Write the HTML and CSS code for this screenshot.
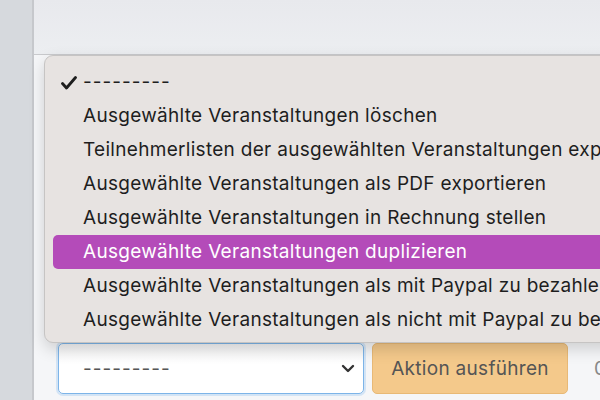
FILE: index.html
```html
<!DOCTYPE html>
<html lang="de">
<head>
<meta charset="utf-8">
<title>Aktionen</title>
<link rel="stylesheet" href="styles.css">
</head>
<body>
<div class="app">
  <aside class="sidebar"></aside>
  <main class="main">
    <div class="topband"></div>
    <div class="spacer"></div>
    <div class="actions">
      <div class="select">
        <span class="select-value">---------</span>
        <svg class="chevron" width="14" height="10" viewBox="0 0 14 10"><polyline points="2,2 7,7 12,2" fill="none" stroke="#333" stroke-width="2.4" stroke-linecap="round" stroke-linejoin="round"/></svg>
      </div>
      <button class="btn">Aktion ausführen</button>
      <span class="counter">0 von 12 ausgewählt</span>
    </div>
  </main>
  <ul class="menu">
    <li class="item checked"><svg class="check" width="16" height="14" viewBox="0 0 16 14"><polyline points="1.5,7.5 5.5,12 14.5,1.5" fill="none" stroke="#1e1e1e" stroke-width="2.8" stroke-linecap="round" stroke-linejoin="round"/></svg>---------</li>
    <li class="item">Ausgewählte Veranstaltungen löschen</li>
    <li class="item">Teilnehmerlisten der ausgewählten Veranstaltungen exportieren</li>
    <li class="item">Ausgewählte Veranstaltungen als PDF exportieren</li>
    <li class="item">Ausgewählte Veranstaltungen in Rechnung stellen</li>
    <li class="item active">Ausgewählte Veranstaltungen duplizieren</li>
    <li class="item">Ausgewählte Veranstaltungen als mit Paypal zu bezahlen markieren</li>
    <li class="item">Ausgewählte Veranstaltungen als nicht mit Paypal zu bezahlen markieren</li>
  </ul>
</div>
</body>
</html>
```

FILE: styles.css
```css
* { box-sizing: border-box; }
html, body { margin: 0; padding: 0; }
body {
  width: 600px;
  height: 400px;
  overflow: hidden;
  font-family: Inter, "Liberation Sans", Arial, sans-serif;
  background: #f4f5f7;
}
.app {
  position: relative;
  display: flex;
  width: 600px;
  height: 400px;
  overflow: hidden;
}
.sidebar {
  width: 34px;
  flex: none;
  background: #d6d9dd;
  border-right: 2px solid #c6c8cc;
}
.main {
  flex: 1;
  display: flex;
  flex-direction: column;
  min-width: 0;
  background: #f5f6f8;
}
.topband {
  height: 55px;
  background: linear-gradient(#e8e9ed, #eceef1);
  border-bottom: 1px solid #c9cacd;
}
.spacer { flex: 1; }
.actions {
  display: flex;
  align-items: center;
  gap: 8px;
  padding-left: 24px;
  margin-bottom: 6px;
  white-space: nowrap;
}
.select {
  width: 306px;
  height: 51px;
  flex: none;
  display: flex;
  align-items: center;
  justify-content: space-between;
  padding: 0 8px 0 24px;
  background: linear-gradient(#f3f3f4, #ffffff 40%);
  border: 1.5px solid #7db4e8;
  border-radius: 5px;
  box-shadow: 0 0 0 2px rgba(150, 195, 240, 0.35);
  color: #555;
  font-size: 19px;
  letter-spacing: 1px;
}
.chevron { display: block; }
.btn {
  width: 196px;
  height: 51px;
  flex: none;
  padding: 0;
  font-family: inherit;
  font-size: 19px;
  letter-spacing: 0.3px;
  color: #555;
  background: #f4c98b;
  border: 1px solid #e8b976;
  border-radius: 5px;
}
.counter {
  margin-left: 18px;
  color: #888;
  font-size: 19px;
}
.menu {
  position: absolute;
  left: 44px;
  top: 55px;
  width: 620px;
  height: 288px;
  margin: 0;
  padding: 9px 8px;
  list-style: none;
  background: #e7e3e1;
  border: 1px solid #c6c4c3;
  border-radius: 9px;
  box-shadow: 0 6px 16px rgba(0, 0, 0, 0.16);
  color: #1e1e1e;
  font-size: 19px;
  letter-spacing: 0.3px;
}
.item {
  position: relative;
  height: 34px;
  line-height: 34px;
  padding-left: 30px;
  white-space: nowrap;
  border-radius: 5px;
}
.item.checked { letter-spacing: 1px; }
.item.active {
  background: #b44bb9;
  color: #fff;
}
.check {
  position: absolute;
  left: 8px;
  top: 11px;
}
```
